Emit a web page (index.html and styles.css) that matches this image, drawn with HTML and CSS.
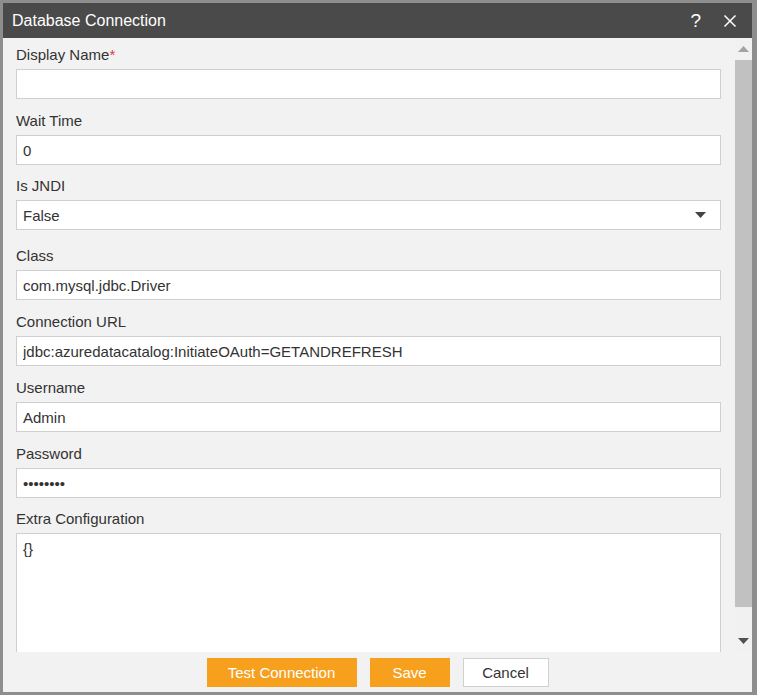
FILE: index.html
```html
<!DOCTYPE html>
<html>
<head>
<meta charset="utf-8">
<link rel="stylesheet" href="styles.css">
</head>
<body>
<div class="dialog">
  <div class="titlebar">
    <span class="title">Database Connection</span>
    <span class="tools">
      <span class="help">?</span>
      <svg class="close" width="14" height="14" viewBox="0 0 14 14"><path d="M1.5 1.5 L12.5 12.5 M12.5 1.5 L1.5 12.5" stroke="#fff" stroke-width="1.5" fill="none"/></svg>
    </span>
  </div>
  <div class="main">
    <div class="content">
      <div class="field">
        <label class="label">Display Name<span class="req">*</span></label>
        <input class="input" type="text" value="">
      </div>
      <div class="field field-tight">
        <label class="label">Wait Time</label>
        <input class="input" type="text" value="0">
      </div>
      <div class="field field-select">
        <label class="label">Is JNDI</label>
        <div class="select">
          <span>False</span>
          <svg class="caret" width="11" height="6" viewBox="0 0 11 6"><path d="M0 0 H11 L5.5 6 Z" fill="#444"/></svg>
        </div>
      </div>
      <div class="field">
        <label class="label">Class</label>
        <input class="input" type="text" value="com.mysql.jdbc.Driver">
      </div>
      <div class="field">
        <label class="label">Connection URL</label>
        <input class="input" type="text" value="jdbc:azuredatacatalog:InitiateOAuth=GETANDREFRESH">
      </div>
      <div class="field">
        <label class="label">Username</label>
        <input class="input" type="text" value="Admin">
      </div>
      <div class="field field-tight">
        <label class="label">Password</label>
        <input class="input pw" type="text" value="••••••••">
      </div>
      <div class="field">
        <label class="label">Extra Configuration</label>
        <textarea class="textarea">{}</textarea>
      </div>
    </div>
    <div class="scrollbar">
      <div class="sb-btn sb-up"><svg width="11" height="6" viewBox="0 0 11 6"><path d="M0 6 H11 L5.5 0 Z" fill="#a3a3a3"/></svg></div>
      <div class="sb-thumb"></div>
      <div class="sb-track"></div>
      <div class="sb-btn sb-down"><svg width="11" height="6" viewBox="0 0 11 6"><path d="M0 0 H11 L5.5 6 Z" fill="#505050"/></svg></div>
    </div>
  </div>
  <div class="footer">
    <button class="btn btn-primary btn-test">Test Connection</button>
    <button class="btn btn-primary btn-save">Save</button>
    <button class="btn btn-default btn-cancel">Cancel</button>
  </div>
</div>
</body>
</html>
```

FILE: styles.css
```css
* { box-sizing: border-box; }
html, body { margin: 0; padding: 0; }
body {
  width: 757px;
  height: 695px;
  font-family: "Liberation Sans", Arial, sans-serif;
  background: #ffffff;
  overflow: hidden;
}
.dialog {
  width: 757px;
  height: 695px;
  border-style: solid;
  border-color: #8e8e8e;
  border-width: 3px 5px 3px 3px;
  background: #f2f2f2;
  display: flex;
  flex-direction: column;
}
.titlebar {
  height: 35px;
  flex: 0 0 35px;
  background: #4a4a4a;
  display: flex;
  align-items: center;
  padding: 0 15px 0 9px;
}
.title {
  color: #ffffff;
  font-size: 16px;
}
.tools {
  margin-left: auto;
  display: flex;
  align-items: center;
  gap: 22px;
}
.help {
  color: #ffffff;
  font-size: 19px;
  line-height: 19px;
  font-family: "Liberation Sans", Arial, sans-serif;
  font-weight: normal;
}
.close { display: block; }
.main {
  height: 614px;
  flex: 0 0 614px;
  display: flex;
  overflow: hidden;
}
.content {
  flex: 1;
  padding: 8px 14px 0 13px;
  overflow: hidden;
}
.field {
  margin-bottom: 13px;
}
.field-tight {
  margin-bottom: 12px;
}
.field-select {
  margin-bottom: 17px;
}
.label {
  display: block;
  font-size: 15px;
  line-height: 17px;
  color: #333333;
  margin-bottom: 6px;
}
.req { color: #e53935; }
.input, .select, .textarea {
  display: block;
  width: 100%;
  height: 30px;
  border: 1px solid #cfcfcf;
  background: #ffffff;
  font-family: "Liberation Sans", Arial, sans-serif;
  font-size: 15px;
  color: #333333;
  padding: 0 6px;
  margin: 0;
  outline: none;
  border-radius: 0;
}
.select {
  display: flex;
  align-items: center;
  padding: 0 14px 0 6px;
}
.caret { margin-left: auto; display: block; }
.textarea {
  height: 150px;
  padding: 6px 6px;
  resize: none;
  line-height: 17px;
}
.scrollbar {
  width: 17px;
  flex: 0 0 17px;
  display: flex;
  flex-direction: column;
  background: #f1f1f1;
}
.sb-btn {
  height: 22px;
  flex: 0 0 22px;
  display: flex;
  align-items: center;
  justify-content: center;
}
.sb-thumb {
  height: 547px;
  flex: 0 0 547px;
  background: #c1c1c1;
}
.sb-track { flex: 1; }
.footer {
  flex: 1;
  display: flex;
  justify-content: center;
  align-items: flex-start;
  padding-top: 6px;
  gap: 13px;
}
.btn {
  height: 29px;
  font-family: "Liberation Sans", Arial, sans-serif;
  font-size: 15px;
  line-height: 27px;
  border-radius: 0;
  padding: 0;
  cursor: pointer;
}
.btn-primary {
  background: #f7a01d;
  border: 1px solid #f7a01d;
  color: #ffffff;
}
.btn-default {
  background: #ffffff;
  border: 1px solid #d0d0d0;
  color: #333333;
}
.btn-test { width: 150px; }
.btn-save { width: 80px; }
.btn-cancel { width: 86px; }
```
